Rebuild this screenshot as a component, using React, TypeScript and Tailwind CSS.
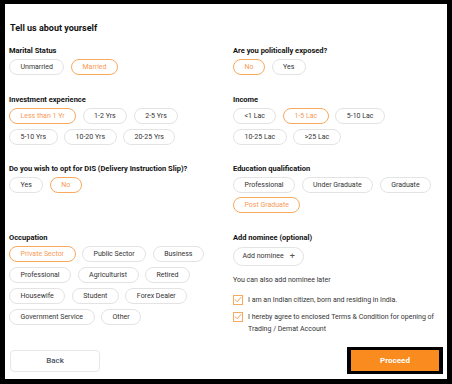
import type { ReactNode } from "react";

const ORANGE_BORDER = "border-[#f9a95f]";

function Chip({ label, active = false }: { label: string; active?: boolean }) {
  return (
    <button
      type="button"
      className={
        active
          ? `h-[16px] rounded-full border ${ORANGE_BORDER} bg-white px-[10.5px] text-[7px] leading-[14px] text-[#f99a58]`
          : "h-[16px] rounded-full border border-[#e3e3e3] bg-white px-[10.5px] text-[7px] leading-[14px] text-[#333]"
      }
    >
      {label}
    </button>
  );
}

function Label({ children }: { children: ReactNode }) {
  return <div className="h-[10px] text-[7.5px] font-bold leading-[10px] text-[#111]">{children}</div>;
}

function Field({ label, rowGap = "gap-y-[5px]", children }: { label: string; rowGap?: string; children: ReactNode }) {
  return (
    <div>
      <Label>{label}</Label>
      <div className={`mt-[3px] flex flex-wrap gap-x-[6.5px] ${rowGap}`}>{children}</div>
    </div>
  );
}

function Check() {
  return (
    <span className={`flex h-[10px] w-[10px] shrink-0 items-center justify-center border ${ORANGE_BORDER}`}>
      <svg viewBox="0 0 10 10" className="h-[9px] w-[9px]" fill="none">
        <path d="M1.2 5 L4 7.8 L9 2" stroke="#f7933a" strokeWidth="1.1" />
      </svg>
    </span>
  );
}

export default function App() {
  return (
    <div className="h-[384px] w-[452px] bg-black pb-[5px] pl-[5px] pr-[5px] pt-[4px] font-['Roboto',sans-serif]">
      <div className="flex h-full flex-col bg-white pb-[5px] pl-[4px] pr-[4px] pt-[18px]">
        <h1 className="h-[12px] pl-[1px] text-[9px] font-bold leading-[12px] text-[#111]">
          Tell us about yourself
        </h1>

        <div className="mt-[12px] grid grid-cols-[224px_1fr] gap-y-[19.5px]">
          <Field label="Marital Status">
            <Chip label="Unmarried" />
            <Chip label="Married" active />
          </Field>
          <Field label="Are you politically exposed?">
            <Chip label="No" active />
            <Chip label="Yes" />
          </Field>

          <Field label="Investment experience">
            <Chip label="Less than 1 Yr" active />
            <Chip label="1-2 Yrs" />
            <Chip label="2-5 Yrs" />
            <Chip label="5-10 Yrs" />
            <Chip label="10-20 Yrs" />
            <Chip label="20-25 Yrs" />
          </Field>
          <div>
            <Label>Income</Label>
            <div className="mt-[3px] flex flex-col gap-y-[5px]">
              <div className="flex gap-x-[6.5px]">
                <Chip label="<1 Lac" />
                <Chip label="1-5 Lac" active />
                <Chip label="5-10 Lac" />
              </div>
              <div className="flex gap-x-[6.5px]">
                <Chip label="10-25 Lac" />
                <Chip label=">25 Lac" />
              </div>
            </div>
          </div>

          <Field label="Do you wish to opt for DIS (Delivery Instruction Slip)?">
            <Chip label="Yes" />
            <Chip label="No" active />
          </Field>
          <Field label="Education qualification" rowGap="gap-y-[4px]">
            <Chip label="Professional" />
            <Chip label="Under Graduate" />
            <Chip label="Graduate" />
            <Chip label="Post Graduate" active />
          </Field>

          <div className="pr-[10px]">
            <Field label="Occupation">
              <Chip label="Private Sector" active />
              <Chip label="Public Sector" />
              <Chip label="Business" />
              <Chip label="Professional" />
              <Chip label="Agriculturist" />
              <Chip label="Retired" />
              <Chip label="Housewife" />
              <Chip label="Student" />
              <Chip label="Forex Dealer" />
              <Chip label="Government Service" />
              <Chip label="Other" />
            </Field>
          </div>
          <div>
            <Label>Add nominee (optional)</Label>
            <button
              type="button"
              className="mt-[4px] flex h-[19px] items-center gap-[6px] rounded-full border border-[#e3e3e3] pl-[8.5px] pr-[8px] text-[7px] text-[#333]"
            >
              Add nominee <span className="text-[9px] leading-none text-[#555]">+</span>
            </button>
            <p className="mt-[9px] text-[7px] leading-[10px] text-[#333]">You can also add nominee later</p>
            <label className="mt-[9px] flex items-center gap-[5px] text-[7px] leading-[12px] text-[#333]">
              <Check />
              <span>I am an Indian citizen, born and residing in India.</span>
            </label>
            <label className="mt-[5px] flex items-start gap-[5px] text-[7px] leading-[12px] text-[#333]">
              <span className="mt-[1px]">
                <Check />
              </span>
              <span>I hereby agree to enclosed Terms &amp; Condition for opening of Trading / Demat Account</span>
            </label>
          </div>
        </div>

        <div className="mt-auto flex items-center justify-between pl-[1px]">
          <button
            type="button"
            className="h-[22px] w-[90px] rounded-[4px] border border-[#e5e7eb] text-[8px] font-medium text-[#4b5563]"
          >
            Back
          </button>
          <div className="border-x-4 border-y-[3px] border-black">
            <button
              type="button"
              className="block h-[21px] w-[88px] bg-[#f98b1f] text-[8px] font-bold text-white"
            >
              Proceed
            </button>
          </div>
        </div>
      </div>
    </div>
  );
}
